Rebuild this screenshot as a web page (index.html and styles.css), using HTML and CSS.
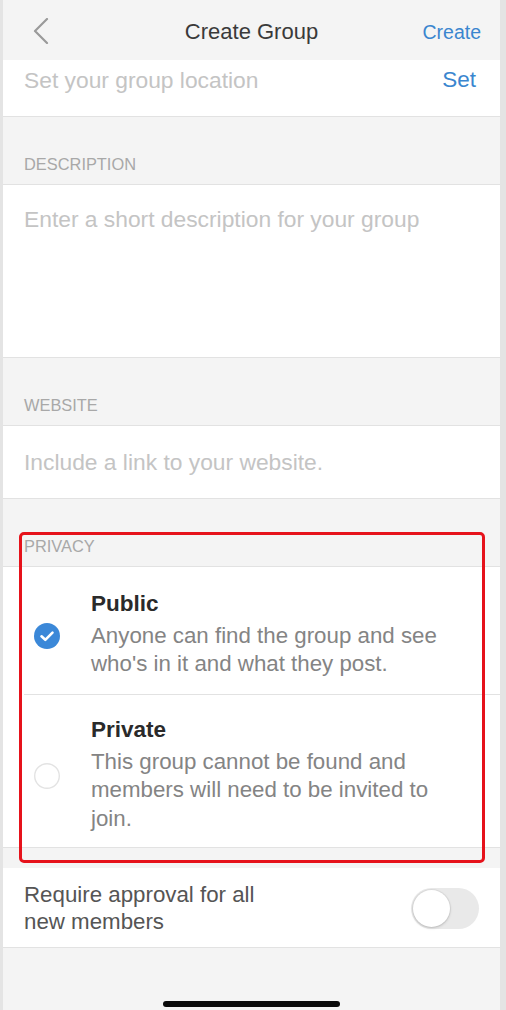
FILE: index.html
```html
<!DOCTYPE html>
<html>
<head>
<meta charset="utf-8">
<link rel="stylesheet" href="styles.css">
</head>
<body>
<div class="screen">
  <header class="nav">
    <svg class="back" width="16" height="26" viewBox="0 0 16 26"><path d="M14 1 L2 13 L14 25" fill="none" stroke="#9a9a9a" stroke-width="2.2" stroke-linecap="round" stroke-linejoin="round"/></svg>
    <div class="title">Create Group</div>
    <div class="action">Create</div>
  </header>

  <div class="row location">
    <span class="placeholder">Set your group location</span>
    <span class="link">Set</span>
  </div>

  <div class="section-label">DESCRIPTION</div>
  <div class="row description">
    <span class="placeholder">Enter a short description for your group</span>
  </div>

  <div class="section-label">WEBSITE</div>
  <div class="row website">
    <span class="placeholder">Include a link to your website.</span>
  </div>

  <div class="section-label">PRIVACY</div>
  <div class="options">
    <div class="option">
      <svg class="radio" width="26" height="26" viewBox="0 0 26 26"><circle cx="13" cy="13" r="13" fill="#3b88d8"/><path d="M7.5 13.3 L11.3 16.8 L18.5 9.6" fill="none" stroke="#fff" stroke-width="2.6" stroke-linecap="round" stroke-linejoin="round"/></svg>
      <div class="option-text">
        <div class="option-title">Public</div>
        <div class="option-desc">Anyone can find the group and see who's in it and what they post.</div>
      </div>
    </div>
    <div class="option">
      <svg class="radio" width="26" height="26" viewBox="0 0 26 26"><circle cx="13" cy="13" r="12.3" fill="#fff" stroke="#e3e3e3" stroke-width="1.4"/></svg>
      <div class="option-text">
        <div class="option-title">Private</div>
        <div class="option-desc">This group cannot be found and members will need to be invited to join.</div>
      </div>
    </div>
  </div>

  <div class="spacer"></div>
  <div class="row approval">
    <span class="approval-text">Require approval for all new members</span>
    <div class="toggle"><div class="knob"></div></div>
  </div>

  <div class="highlight"></div>
  <div class="home-indicator"></div>
</div>
</body>
</html>
```

FILE: styles.css
```css
* { box-sizing: border-box; }
html, body { margin: 0; padding: 0; }
body {
  background: #e4e4e4;
  font-family: "Liberation Sans", Arial, sans-serif;
  width: 506px;
  height: 1010px;
  overflow: hidden;
}
.screen {
  position: relative;
  margin-left: 3px;
  width: 497px;
  height: 1010px;
  background: #f4f4f4;
  display: flex;
  flex-direction: column;
}
.nav {
  height: 60px;
  flex: none;
  display: flex;
  align-items: center;
  position: relative;
  padding: 4px 19px 0 30px;
}
.back { flex: none; margin-top: -3px; }
.title {
  position: absolute;
  left: 0; right: 0;
  top: 18px;
  text-align: center;
  font-size: 22px;
  line-height: 28px;
  color: #3a3a3a;
  pointer-events: none;
}
.action {
  margin-left: auto;
  font-size: 19.5px;
  color: #3a86cf;
}
.row {
  background: #fff;
  border-bottom: 1px solid #e2e2e2;
  display: flex;
  flex: none;
}
.placeholder {
  font-size: 22.8px;
  color: #c4c4c4;
}
.location {
  height: 57px;
  padding: 5px 24px 0 21px;
  align-items: flex-start;
  justify-content: space-between;
  line-height: 30px;
}
.link {
  font-size: 22.5px;
  color: #3a86cf;
}
.section-label {
  flex: none;
  height: 68px;
  border-bottom: 1px solid #e2e2e2;
  display: flex;
  align-items: flex-end;
  padding: 0 21px 10px;
  font-size: 16.4px;
  line-height: 20px;
  color: #a8a8a8;
}
.description {
  height: 173px;
  padding: 19px 21px 0;
  line-height: 30px;
}
.website {
  height: 73px;
  padding: 0 21px;
  align-items: center;
}
.options {
  background: #fff;
  border-bottom: 1px solid #e2e2e2;
  flex: none;
}
.option {
  display: flex;
  align-items: center;
  padding: 22px 30px 15px 31px;
  position: relative;
}
.option + .option::before {
  content: "";
  position: absolute;
  top: 0; left: 21px; right: 0;
  border-top: 1px solid #e2e2e2;
}
.option:first-child { padding-bottom: 15px; height: 127px; }
.option:last-child { height: 153px; padding-top: 23px; }
.radio { flex: none; margin-right: 31px; margin-top: 3px; }
.option-title {
  font-size: 22.5px;
  font-weight: bold;
  color: #2a2a2a;
  line-height: 28px;
}
.option-desc {
  margin-top: 4px;
  font-size: 22.3px;
  line-height: 28.5px;
  color: #848484;
}
.spacer { height: 20px; flex: none; }
.approval {
  height: 80px;
  align-items: center;
  justify-content: space-between;
  padding: 0 21px 0 21px;
}
.approval-text {
  font-size: 22.3px;
  line-height: 27px;
  color: #555;
  max-width: 265px;
}
.toggle {
  width: 68px;
  height: 41px;
  border-radius: 21px;
  background: #e9e9e9;
  padding: 2px;
  flex: none;
  margin-top: 1px;
}
.knob {
  width: 37px;
  height: 37px;
  border-radius: 50%;
  background: #fff;
  box-shadow: 0 1px 3px rgba(0,0,0,0.18), 0 0 0 1px rgba(0,0,0,0.04);
}
.highlight {
  position: absolute;
  left: 16px;
  top: 532px;
  width: 466px;
  height: 331px;
  border: 3.5px solid #e6121b;
  border-radius: 5px;
  pointer-events: none;
}
.home-indicator {
  position: absolute;
  left: 160px;
  top: 1001px;
  width: 177px;
  height: 6px;
  border-radius: 3px;
  background: #0a0a0a;
}
```
